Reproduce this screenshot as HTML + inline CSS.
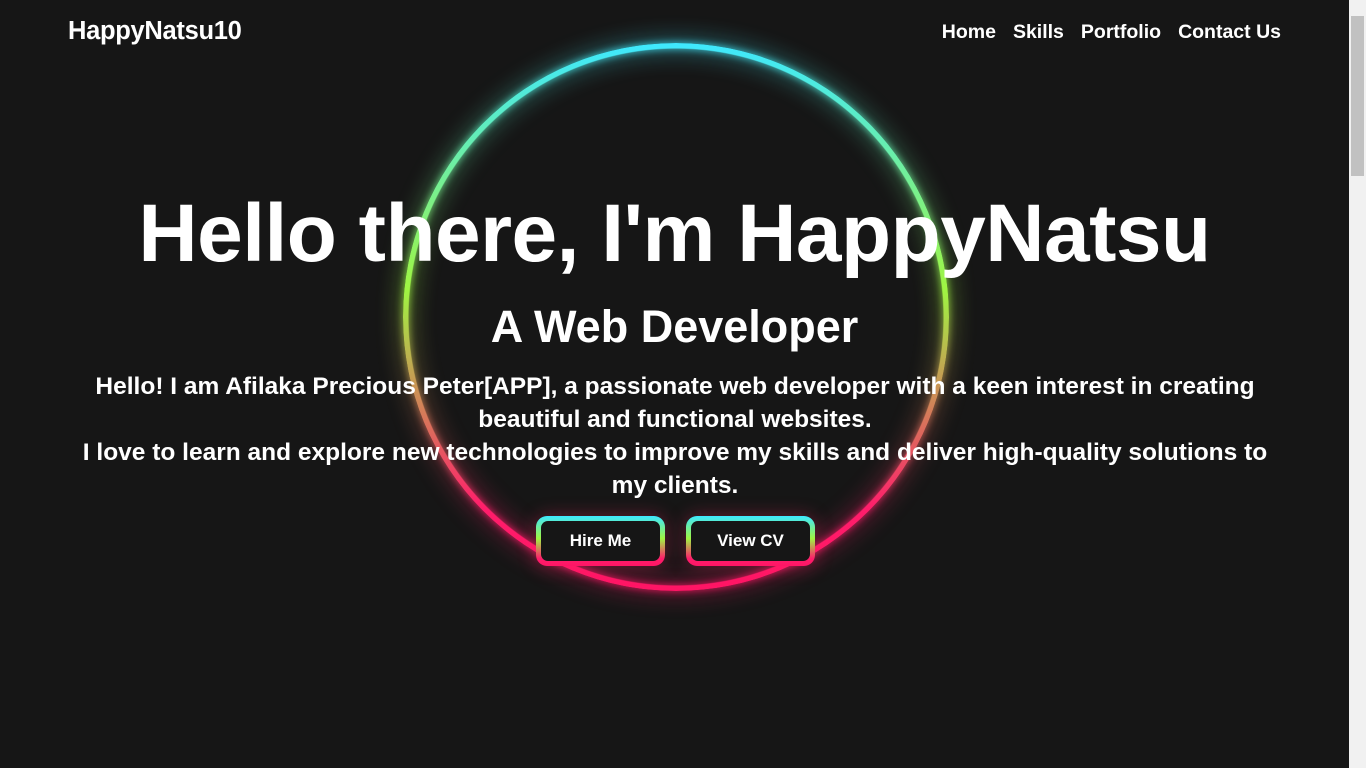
<!DOCTYPE html>
<html><head><style>
html,body{margin:0;height:768px;overflow:hidden;background:#161616;font-family:"Liberation Sans",sans-serif;color:#fff}
.sb{position:absolute;right:0;top:0;width:17px;height:768px;background:#f1f1f1}
.sb div{position:absolute;left:2px;right:2px;top:16px;height:160px;background:#c1c1c1}
.logo{position:absolute;left:68px;top:17px;font-size:25.5px;font-weight:bold;letter-spacing:-0.3px}
nav{position:absolute;right:85px;top:21px;font-size:19.5px;font-weight:bold}
nav span{margin-left:17px}
.g{background:linear-gradient(#3ee8ff,#9ff542 45%,#ff1d6b 85%,#ff1565)}
.ring{position:absolute;left:403px;top:43px;width:546px;height:548px;border-radius:50%;
-webkit-mask:radial-gradient(closest-side,transparent calc(100% - 6px),#000 calc(100% - 5px));mask:radial-gradient(closest-side,transparent calc(100% - 6px),#000 calc(100% - 5px))}
.glow{position:absolute;inset:0;filter:blur(12px)}
.c{position:absolute;left:0;width:1349px;text-align:center;font-weight:bold}
h1{margin:0;font-size:82px;top:187px;letter-spacing:-0.5px}
h2{margin:0;font-size:45px;top:301px}
p{margin:0;font-size:24.5px;line-height:33px;top:370px;left:70px!important;width:1210px!important}
.btn{position:absolute;top:516px;width:129px;height:50px;border-radius:11px;box-shadow:0 0 18px rgba(255,40,100,.35)}
.btn div{position:absolute;inset:5px;background:#161616;border-radius:7px;text-align:center;line-height:40px;font-size:17px;font-weight:bold}
</style></head><body>
<div class="glow"><div class="ring g"></div></div>
<div class="glow" style="filter:blur(4px)"><div class="ring g"></div></div>
<div class="ring g"></div>
<div class="logo">HappyNatsu10</div>
<nav><span>Home</span><span>Skills</span><span>Portfolio</span><span>Contact Us</span></nav>
<h1 class="c">Hello there, I'm HappyNatsu</h1>
<h2 class="c">A Web Developer</h2>
<p class="c">Hello! I am Afilaka Precious Peter[APP], a passionate web developer with a keen interest in creating beautiful and functional websites.<br>I love to learn and explore new technologies to improve my skills and deliver high-quality solutions to my clients.</p>
<div class="btn g" style="left:536px"><div>Hire Me</div></div>
<div class="btn g" style="left:686px"><div>View CV</div></div>
<div class="sb"><div></div></div>
</body></html>
